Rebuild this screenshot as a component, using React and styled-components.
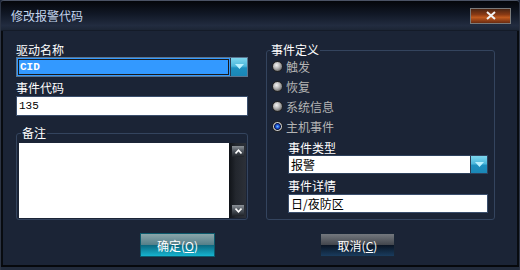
import React from 'react';
import styled, { createGlobalStyle, css } from 'styled-components';

const GlobalStyle = createGlobalStyle`
  body {
    margin: 0;
    background: #1b2436;
  }
`;

const Window = styled.div`
  width: 520px;
  height: 270px;
  box-sizing: border-box;
  display: flex;
  flex-direction: column;
  background: #1b2436;
  border-top: 1px solid #4a5264;
  border-left: 1px solid #2c3444;
  border-right: 1px solid #2c3444;
  border-radius: 4px 4px 0 0;
  box-shadow: inset 0 -3px 0 #222b3c, inset 0 -5px 0 #06080c,
    inset 2px 0 0 #080b10, inset -2px 0 0 #080b10;
  overflow: hidden;
  font-family: 'Noto Sans CJK SC', 'Liberation Sans', sans-serif;
  font-size: 12px;
  color: #ffffff;
`;

const TitleBar = styled.div`
  height: 29px;
  flex-shrink: 0;
  display: flex;
  align-items: center;
  justify-content: space-between;
  padding: 0 8px 0 10px;
  background: linear-gradient(#04060a 0%, #111826 45%, #222c40 85%, #1c2535 100%);
  border-bottom: 1px solid #141b28;
`;

const Title = styled.span`
  color: #c4d6ee;
  line-height: 14px;
`;

const CloseButton = styled.button`
  width: 41px;
  height: 16px;
  padding: 0;
  border: 1px solid #7a7a7a;
  background: linear-gradient(#4a2412 0%, #8a3a14 40%, #c05a1e 60%, #6a2a10 100%);
  display: flex;
  align-items: center;
  justify-content: center;
`;

const Body = styled.div`
  display: flex;
  flex-direction: column;
  padding: 12px 24px 0 15px;
`;

const Columns = styled.div`
  display: flex;
  gap: 18px;
`;

const LeftColumn = styled.div`
  width: 232px;
  display: flex;
  flex-direction: column;
`;

const Label = styled.label`
  display: block;
  height: 14px;
  line-height: 14px;
  margin-top: ${({ $gap }) => $gap || 0}px;
  color: #ffffff;
  white-space: nowrap;
`;

const SelectBox = styled.div`
  display: flex;
  height: ${({ $h }) => $h}px;
  margin-top: ${({ $gap }) => $gap || 0}px;
  box-sizing: border-box;
  border: 1px solid ${({ $active }) => ($active ? '#5b7590' : '#2e415c')};
  background: ${({ $active }) => ($active ? '#3399ff' : '#ffffff')};
`;

const SelectValue = styled.div`
  flex: 1;
  display: flex;
  align-items: center;
  padding-left: 2px;
  box-sizing: border-box;
  font-size: ${({ $mono }) => ($mono ? '11px' : '12px')};
  font-family: ${({ $mono }) =>
    $mono ? "'Liberation Mono', monospace" : "'Noto Sans CJK SC', sans-serif"};
  color: ${({ $active }) => ($active ? '#ffffff' : '#000000')};
  ${({ $active }) =>
    $active &&
    css`
      margin: 1px;
      border: 1px dashed #ff8c00;
      outline: 1px solid #1a1a1a;
      outline-offset: -1px;
      padding-left: 1px;
      font-weight: bold;
    `}
`;

const DropButton = styled.div`
  width: 17px;
  flex-shrink: 0;
  box-sizing: border-box;
  border-left: 1px solid #2a3c54;
  background: linear-gradient(#7ed6ee 0%, #4cb8dc 45%, #1d8fbf 55%, #1a86b6 100%);
  display: flex;
  align-items: center;
  justify-content: center;
`;

const TextInput = styled.div`
  height: ${({ $h }) => $h}px;
  margin-top: ${({ $gap }) => $gap || 0}px;
  box-sizing: border-box;
  border: 1px solid #3a4e6c;
  background: #ffffff;
  color: #000000;
  display: flex;
  align-items: center;
  padding-left: 2px;
  font-size: ${({ $mono }) => ($mono ? '11px' : '12px')};
  font-family: ${({ $mono }) =>
    $mono ? "'Liberation Mono', monospace" : "'Noto Sans CJK SC', sans-serif"};
`;

const Group = styled.fieldset`
  flex: ${({ $grow }) => ($grow ? 1 : 'none')};
  margin: ${({ $top }) => $top || 0}px 0 0 0;
  padding: ${({ $pad }) => $pad};
  border: 1px solid #34445e;
  border-radius: 3px;
  min-width: 0;
`;

const Legend = styled.legend`
  padding: 0 1px;
  margin-left: ${({ $offset }) => $offset}px;
  height: 14px;
  line-height: 14px;
  color: #ffffff;
`;

const NoteArea = styled.div`
  display: flex;
  height: 75px;
`;

const NoteText = styled.div`
  flex: 1;
  background: #ffffff;
`;

const ScrollBar = styled.div`
  width: 17px;
  box-sizing: border-box;
  padding: 3px 2px 2px 3px;
  background: linear-gradient(90deg, #101318 0%, #23272e 40%, #2c3038 100%);
  display: flex;
  flex-direction: column;
  justify-content: space-between;
`;

const ScrollArrow = styled.div`
  height: 11px;
  background: linear-gradient(#8a9096 0%, #4a5058 50%, #1e2228 100%);
  display: flex;
  align-items: center;
  justify-content: center;
`;

const EventGroupBody = styled.div`
  display: flex;
  flex-direction: column;
  margin-top: -1px;
`;

const RadioRow = styled.div`
  height: 20px;
  display: flex;
  align-items: center;
  gap: 3px;
  color: #b4b4b4;
`;

const RadioDot = styled.span`
  width: 11px;
  height: 11px;
  border-radius: 50%;
  box-sizing: border-box;
  border: 1px solid #222;
  background: ${({ $checked }) =>
    $checked
      ? 'radial-gradient(circle at 50% 50%, #6cc0ff 0%, #1848d0 30%, #0a1a40 48%, #d0d0d0 60%, #6a6a6a 100%)'
      : 'radial-gradient(circle at 40% 35%, #f4f4f4 0%, #b8b8b8 40%, #6a6a6a 80%, #3a3a3a 100%)'};
`;

const SubFields = styled.div`
  display: flex;
  flex-direction: column;
  padding-left: 16px;
`;

const ButtonRow = styled.div`
  display: flex;
  gap: 105px;
  padding-left: 124px;
  margin-top: 13px;
`;

const ActionButton = styled.button`
  width: 75px;
  height: 24px;
  padding: 0;
  box-sizing: border-box;
  font-family: 'Noto Sans CJK SC', sans-serif;
  font-size: 12px;
  color: #ffffff;
  border: 1px solid ${({ $primary }) => ($primary ? '#0c5a6c' : '#1a2636')};
  background: ${({ $primary }) =>
    $primary
      ? 'linear-gradient(#8aa6aa 0%, #56808a 48%, #0c6a82 52%, #16b4d0 100%)'
      : 'linear-gradient(#74787e 0%, #43474e 48%, #0a1626 52%, #1a3c5e 100%)'};
`;

const ArrowDown = () => (
  <svg width="9" height="6" viewBox="0 0 9 6">
    <path d="M0 0h9L4.5 5z" fill="#b8f0ff" />
  </svg>
);

const Chevron = ({ up }) => (
  <svg width="7" height="5" viewBox="0 0 7 5">
    <path
      d={up ? 'M0.5 4.5L3.5 1.2L6.5 4.5' : 'M0.5 0.5L3.5 3.8L6.5 0.5'}
      stroke="#ffffff"
      strokeWidth="1.6"
      fill="none"
    />
  </svg>
);

const CloseIcon = () => (
  <svg width="10" height="9" viewBox="0 0 10 9">
    <path d="M1 1L9 8M9 1L1 8" stroke="#f2f2f2" strokeWidth="2" />
  </svg>
);

const radios = [
  { label: '触发' },
  { label: '恢复' },
  { label: '系统信息' },
  { label: '主机事件', checked: true },
];

const App = () => {
  return (
    <>
      <GlobalStyle />
      <Window>
        <TitleBar>
          <Title>修改报警代码</Title>
          <CloseButton>
            <CloseIcon />
          </CloseButton>
        </TitleBar>

        <Body>
          <Columns>
            <LeftColumn>
              <Label>驱动名称</Label>
              <SelectBox $h={20} $active>
                <SelectValue $active $mono>
                  CID
                </SelectValue>
                <DropButton>
                  <ArrowDown />
                </DropButton>
              </SelectBox>

              <Label $gap={4}>事件代码</Label>
              <TextInput $h={20} $gap={1} $mono>
                135
              </TextInput>

              <Group $top={10} $pad="3px 1px 1px 2px">
                <Legend $offset={2}>备注</Legend>
                <NoteArea>
                  <NoteText />
                  <ScrollBar>
                    <ScrollArrow>
                      <Chevron up />
                    </ScrollArrow>
                    <ScrollArrow>
                      <Chevron />
                    </ScrollArrow>
                  </ScrollBar>
                </NoteArea>
              </Group>
            </LeftColumn>

            <Group $grow $pad="0 6px 5px 5px">
              <Legend $offset={-2}>事件定义</Legend>
              <EventGroupBody>
                {radios.map((r) => (
                  <RadioRow key={r.label}>
                    <RadioDot $checked={r.checked} />
                    {r.label}
                  </RadioRow>
                ))}
                <SubFields>
                  <Label $gap={5}>事件类型</Label>
                  <SelectBox $h={19}>
                    <SelectValue>报警</SelectValue>
                    <DropButton>
                      <ArrowDown />
                    </DropButton>
                  </SelectBox>
                  <Label $gap={5}>事件详情</Label>
                  <TextInput $h={19} $gap={1}>
                    日/夜防区
                  </TextInput>
                </SubFields>
              </EventGroupBody>
            </Group>
          </Columns>

          <ButtonRow>
            <ActionButton $primary>
              确定(<u>O</u>)
            </ActionButton>
            <ActionButton>
              取消(<u>C</u>)
            </ActionButton>
          </ButtonRow>
        </Body>
      </Window>
    </>
  );
};

export default App;
